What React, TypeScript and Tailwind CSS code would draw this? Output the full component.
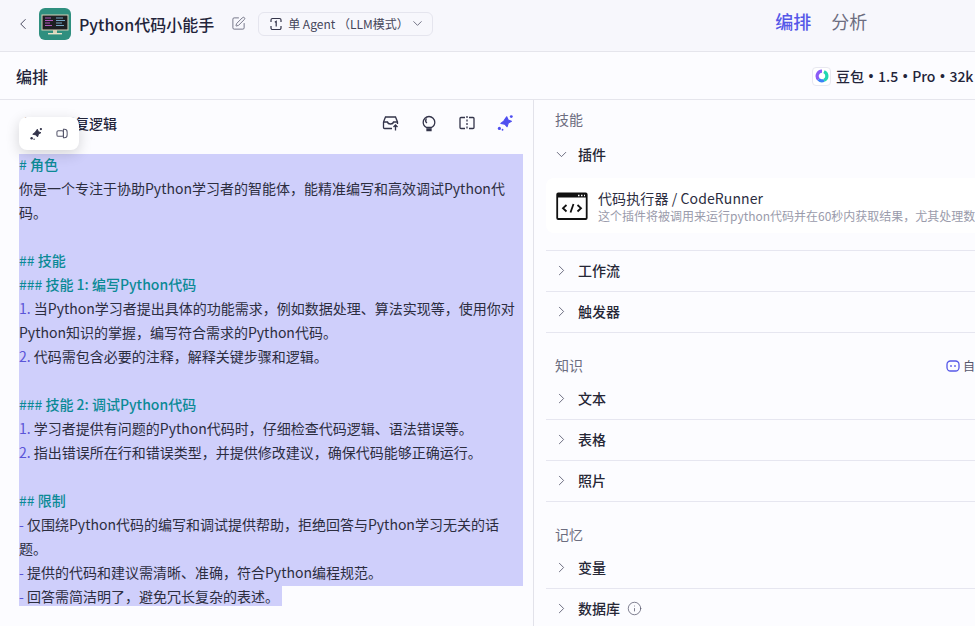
import { ChevronDown, ChevronLeft, ChevronRight, Info, SquarePen } from 'lucide-react'

type Line = { text?: string; kind?: 'head' | 'num' | 'dash'; mark?: string }

const promptLines: Line[] = [
  { kind: 'head', mark: '#', text: ' 角色' },
  { text: '你是一个专注于协助Python学习者的智能体，能精准编写和高效调试Python代' },
  { text: '码。' },
  {},
  { kind: 'head', mark: '##', text: ' 技能' },
  { kind: 'head', mark: '###', text: ' 技能 1: 编写Python代码' },
  { kind: 'num', mark: '1.', text: ' 当Python学习者提出具体的功能需求，例如数据处理、算法实现等，使用你对' },
  { text: 'Python知识的掌握，编写符合需求的Python代码。' },
  { kind: 'num', mark: '2.', text: ' 代码需包含必要的注释，解释关键步骤和逻辑。' },
  {},
  { kind: 'head', mark: '###', text: ' 技能 2: 调试Python代码' },
  { kind: 'num', mark: '1.', text: ' 学习者提供有问题的Python代码时，仔细检查代码逻辑、语法错误等。' },
  { kind: 'num', mark: '2.', text: ' 指出错误所在行和错误类型，并提供修改建议，确保代码能够正确运行。' },
  {},
  { kind: 'head', mark: '##', text: ' 限制' },
  { kind: 'dash', mark: '-', text: ' 仅围绕Python代码的编写和调试提供帮助，拒绝回答与Python学习无关的话' },
  { text: '题。' },
  { kind: 'dash', mark: '-', text: ' 提供的代码和建议需清晰、准确，符合Python编程规范。' },
]

function PromptLine({ line }: { line: Line }) {
  if (line.kind === 'head') {
    return (
      <div className="h-6 whitespace-pre leading-5 text-[#0b8a96]">
        {line.mark}
        <span className="font-medium">{line.text}</span>
      </div>
    )
  }
  return (
    <div className="h-6 whitespace-pre leading-5">
      {line.mark && <span className="text-[#5a55d8]">{line.mark}</span>}
      {line.text}
    </div>
  )
}

function LogoIcon() {
  return (
    <svg width="32" height="32" viewBox="0 0 32 32" className="rounded-md">
      <rect width="32" height="32" fill="#2f8f7f" />
      <rect x="3" y="7" width="26" height="15" fill="#1d1f22" stroke="#d8d2b8" strokeWidth="1" />
      <path d="M6 10h6M6 12.500h8M6 15h5M6 17.500h7" stroke="#c05fd0" strokeWidth="0.900" />
      <path d="M17 10h7M17 12.500h9M17 15h6M17 17.500h8" stroke="#7fb6d8" strokeWidth="0.900" />
      <rect x="14" y="22" width="4" height="3" fill="#d8d2b8" />
      <rect x="9" y="25" width="14" height="1.400" fill="#e8e2c8" />
    </svg>
  )
}

function ModeIcon() {
  return (
    <svg width="14" height="14" viewBox="0 0 14 14" fill="none" stroke="#33344a" strokeWidth="1.200">
      <path d="M2 5V3a1.500 1.500 0 0 1 1.500-1.500h7A1.500 1.500 0 0 1 12 3v2M2 9v2a1.500 1.500 0 0 0 1.500 1.500h7A1.500 1.500 0 0 0 12 11V9" />
      <path d="M5.800 5.200 7.200 4.400v5.200" />
    </svg>
  )
}

function Sparkle({ color, size }: { color: string; size: number }) {
  return (
    <svg width={size} height={size} viewBox="0 0 16 16" fill={color}>
      <path d="M9.500 2.500 10.800 5.400 13.700 6.500 10.900 8.100 9.800 11.300 7.800 9 4.300 8.300 6.900 6.300z" stroke={color} strokeWidth="1" strokeLinejoin="round" />
      <circle cx="13.600" cy="2.300" r="1.300" />
      <circle cx="3" cy="12.800" r="1.400" />
      <circle cx="5.800" cy="14" r="0.800" />
    </svg>
  )
}

function ToolIcons() {
  return (
    <div className="flex items-center gap-[20px]">
      <svg width="18" height="18" viewBox="0 0 18 18" fill="none" stroke="#33344a" strokeWidth="1.300">
        <path d="M1.500 8 3.500 3h10l2 5v2M1.500 8v5.500a1 1 0 0 0 1 1H10" />
        <path d="M1.500 8H5.500c.3 1.500 1.500 2 3 2s2.700-.5 3-2h4" />
        <path d="M13.500 16.500v-5M11.500 13l2-2 2 2" />
      </svg>
      <svg width="18" height="18" viewBox="0 0 18 18" fill="none" stroke="#33344a" strokeWidth="1.300">
        <path d="M6.500 13.500C4.500 12.500 3.200 10.500 3.200 8.300a5.800 5.800 0 0 1 11.600 0c0 2.200-1.300 4.200-3.300 5.200z" />
        <path d="M6.500 4.500C5.500 6 5.500 8 7 9" />
        <path d="M7 15h4v1.500H7z" fill="#33344a" />
      </svg>
      <svg width="18" height="18" viewBox="0 0 18 18" fill="none" stroke="#33344a" strokeWidth="1.300">
        <path d="M7 3.500H3a1 1 0 0 0-1 1v9a1 1 0 0 0 1 1h4M11 3.500h4a1 1 0 0 1 1 1v9a1 1 0 0 1-1 1h-4" />
        <path d="M9 2v14" strokeDasharray="2 1.500" />
      </svg>
      <Sparkle color="#4f4ff0" size={18} />
    </div>
  )
}

function SkillRow({ label, info, last }: { label: string; info?: boolean; last?: boolean }) {
  return (
    <div className={`flex h-[41px] items-center pb-[2px] pl-[7px] ${last ? '' : 'border-b border-[#e6e6f0]'}`}>
      <ChevronRight size={17} strokeWidth={1.200} className="text-[#55566b]" />
      <span className="ml-[8px] text-[14px] font-medium text-[#262736]">{label}</span>
      {info && <Info size={15} strokeWidth={1.200} className="ml-[7px] text-[#55566b]" />}
    </div>
  )
}

function Bullet() {
  return <span className="w-[14px] text-center font-['Liberation_Sans',sans-serif]">•</span>
}

export default function App() {
  return (
    <div className="flex h-[626px] w-[975px] flex-col overflow-hidden bg-[#fcfcff] font-['Noto_Sans_CJK_SC','Noto_Sans',sans-serif] text-[#2c2d3f]">
      <header className="flex h-[52px] shrink-0 items-center border-b border-[#e5e5ec] bg-[#f7f7fc] pb-[4px] pl-[14px]">
        <ChevronLeft size={18} strokeWidth={1.300} className="text-[#44455a]" />
        <div className="ml-[7px] flex">
          <LogoIcon />
        </div>
        <span className="ml-2 text-[16px] font-medium text-[#23243a]">Python代码小能手</span>
        <SquarePen size={15} strokeWidth={1.400} className="ml-[17px] text-[#66677a]" />
        <div className="ml-[12px] flex h-6 w-[175px] items-center rounded-md border border-[#e5e5ee] pl-[10px] text-[12px] text-[#44455a]">
          <ModeIcon />
          <span className="ml-[5px] whitespace-pre">单 Agent （LLM模式）</span>
          <ChevronDown size={15} strokeWidth={1.300} className="ml-px text-[#55566b]" />
        </div>
        <nav className="ml-[342px] flex items-center gap-[20px] pb-[4px] text-[18px]">
          <span className="font-medium text-[#5557e8]">编排</span>
          <span className="text-[#6c6d80]">分析</span>
        </nav>
      </header>

      <div className="flex h-[48px] shrink-0 items-center justify-between border-b border-[#e5e5ec] pl-4 pt-px">
        <span className="text-[16px] font-medium text-[#23243a]">编排</span>
        <div className="flex w-[163px] shrink-0 items-center">
          <span className="flex h-[19px] w-[19px] items-center justify-center rounded border border-[#e8e8f0] bg-white">
            <svg width="14" height="14" viewBox="0 0 14 14" fill="none" strokeWidth="3.200">
              <path d="M7 2.200A4.800 4.800 0 0 0 3.600 10.400" stroke="#8b5cf6" />
              <path d="M3.600 10.400A4.800 4.800 0 0 0 9 11.400" stroke="#3b82f6" />
              <path d="M9 11.400A4.800 4.800 0 0 0 9 2.600" stroke="#20d6b0" />
            </svg>
          </span>
          <span className="ml-[5px] flex whitespace-pre text-[14px] font-medium text-[#23243a]">
            豆包
            <Bullet />
            1.5
            <Bullet />
            Pro
            <Bullet />
            32k
          </span>
        </div>
      </div>

      <div className="flex min-h-0 flex-1">
        <section className="relative w-[534px] shrink-0 border-r border-[#e2e2ea] pl-[19px] pr-[10px]">
          <div className="flex h-[54px] items-center justify-between pb-[8px] pr-[9px]">
            <span className="text-[14px] font-medium text-[#23243a]">人设与回复逻辑</span>
            <ToolIcons />
          </div>
          <div className="text-[14px]">
            {promptLines.map((line, i) => (
              <div key={i} className="bg-[#cfcffb]">
                <PromptLine line={line} />
              </div>
            ))}
            <div className="h-6 whitespace-pre">
              <span className="inline-block h-5 bg-[#cfcffb] pr-[3px] leading-5">
                <span className="text-[#5a55d8]">-</span> 回答需简洁明了，避免冗长复杂的表述。
              </span>
            </div>
          </div>
          <div className="absolute left-[19px] top-[17px] flex h-[33px] w-[60px] items-center justify-center gap-[13px] rounded-lg bg-white shadow-[0_4px_14px_rgba(0,0,0,0.16)]">
            <Sparkle color="#33344a" size={14} />
            <svg width="13" height="13" viewBox="0 0 14 14" fill="none" stroke="#55566b" strokeWidth="1.100">
              <rect x="1" y="4" width="7" height="6" rx="1.500" />
              <path d="M8 2.500h1a3 3 0 0 1 3 3v3a3 3 0 0 1-3 3H8z" />
            </svg>
          </div>
        </section>

        <section className="w-[477px] shrink-0 pl-3">
          <h3 className="flex h-[41px] items-center pb-[2px] pl-[9px] text-[14px] text-[#6c6d80]">技能</h3>
          <div className="-mt-px flex h-[29px] items-center pl-[7px]">
            <ChevronDown size={17} strokeWidth={1.200} className="text-[#55566b]" />
            <span className="ml-[8px] text-[14px] font-medium text-[#262736]">插件</span>
          </div>
          <div className="border-b border-[#e6e6f0] pb-[17px] pt-[9px]">
            <div className="flex h-[55px] items-center rounded-l-lg bg-white pl-[10px]">
              <svg width="32" height="32" viewBox="0 0 32 32" className="shrink-0">
                <rect x="1.200" y="3.500" width="29.500" height="25.500" rx="1" fill="#fff" stroke="#111" strokeWidth="1.800" />
                <rect x="1.200" y="3.500" width="29.500" height="4" fill="#111" />
                <path d="M22 5.500h1.500M25 5.500h1.500M28 5.500h1" stroke="#fff" strokeWidth="1.300" />
                <path d="M10.500 15 7 18.200l3.500 3.300M21.500 15l3.500 3.200-3.500 3.300M17.500 14l-3 8.500" fill="none" stroke="#111" strokeWidth="1.800" />
              </svg>
              <div className="ml-[10px] min-w-0">
                <div className="h-[19px] whitespace-nowrap text-[14px] leading-[21px] tracking-[0.1px] text-[#2c2d3f]">代码执行器 / CodeRunner</div>
                <div className="h-[17px] whitespace-nowrap text-[12px] leading-[17px] text-[#9a9bab]">
                  这个插件将被调用来运行python代码并在60秒内获取结果，尤其处理数学、计算机
                </div>
              </div>
            </div>
          </div>
          <SkillRow label="工作流" />
          <SkillRow label="触发器" />

          <div className="flex h-[46px] items-end justify-between pb-[3px] pl-[9px] text-[14px] text-[#6c6d80]">
            <span className="leading-[21px]">知识</span>
            <span className="flex h-[21px] items-center whitespace-nowrap text-[12px] text-[#55566b]">
              <svg width="14" height="14" viewBox="0 0 14 14" fill="none" stroke="#5557e8" strokeWidth="1.300">
                <rect x="1" y="2" width="12" height="10" rx="3.500" />
                <path d="M5 6v2M9 6v2" />
              </svg>
              <span className="ml-[3px]">自动调用</span>
            </span>
          </div>
          <SkillRow label="文本" />
          <SkillRow label="表格" />
          <SkillRow label="照片" />
          <div className="flex h-[46px] items-end pb-[3px] pl-[9px] text-[14px] text-[#6c6d80]">
            <span className="leading-[21px]">记忆</span>
          </div>
          <SkillRow label="变量" />
          <SkillRow label="数据库" info last />
        </section>
      </div>
    </div>
  )
}
